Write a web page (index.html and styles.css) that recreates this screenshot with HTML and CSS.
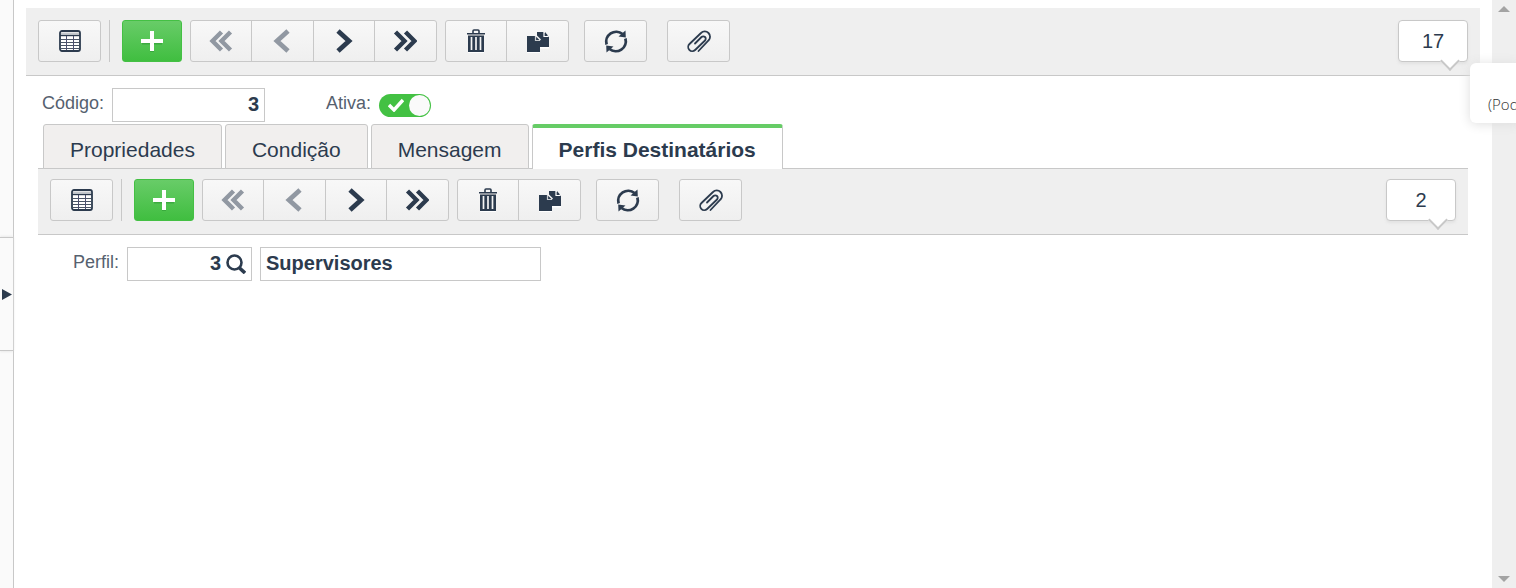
FILE: index.html
```html
<!DOCTYPE html>
<html lang="pt-BR">
<head>
    <meta charset="UTF-8">
    <meta name="viewport" content="width=device-width, initial-scale=1.0">
    <title>Perfis Destinatários</title>
    <link rel="stylesheet" href="styles.css">
</head>
<body>
    <svg class="sprite" aria-hidden="true">
        <symbol id="i-grid" viewBox="0 0 22 22">
            <rect x="1" y="1" width="20" height="20" rx="2" fill="#fff" stroke="#2c3b4e" stroke-width="1.8"/>
            <path d="M2 3.500h18" stroke="#c4c8cd" stroke-width="2"/>
            <path d="M1 5.500h20" stroke="#2c3b4e" stroke-width="1.400"/>
            <path d="M2 9.500h18M2 12.500h18M2 15.500h18M2 18.500h18" stroke="#4a5666" stroke-width="1"/>
            <path d="M7.500 6v14M14.500 6v14" stroke="#4d5070" stroke-width="1"/>
        </symbol>
        <symbol id="i-plus" viewBox="0 0 22 22">
            <path d="M11 3v19M1 12.5h20" stroke="#2f9a35" stroke-opacity=".6" stroke-width="4"/>
            <path d="M11 1v20M0 11h22" stroke="#fff" stroke-width="4"/>
        </symbol>
        <symbol id="i-prev" viewBox="0 0 24 24">
            <path d="M18 2 7 12l11 10" fill="none" stroke="currentColor" stroke-width="4.8"/>
        </symbol>
        <symbol id="i-next" viewBox="0 0 24 24">
            <path d="M6 2l11 10L6 22" fill="none" stroke="currentColor" stroke-width="4.8"/>
        </symbol>
        <symbol id="i-first" viewBox="0 0 24 24">
            <path d="M12.500 3 3.500 12l9 9M21.500 3l-9 9 9 9" fill="none" stroke="currentColor" stroke-width="4.400"/>
        </symbol>
        <symbol id="i-last" viewBox="0 0 24 24">
            <path d="M2.500 3l9 9-9 9M12.500 3l9 9-9 9" fill="none" stroke="currentColor" stroke-width="4.400"/>
        </symbol>
        <symbol id="i-trash" viewBox="0 0 24 24">
            <path d="M4 24.500h16" stroke="#fff" stroke-width="3"/>
            <path d="M9 4.500V2q0-1 1-1h4q1 0 1 1v2.500" fill="none" stroke="currentColor" stroke-width="1.600"/>
            <path d="M3 4h18v1.500H3z" fill="currentColor"/>
            <path d="M4 5.500h16V7H4z" fill="#8f959c"/>
            <path d="M4 7h16v16H4z" fill="currentColor"/>
            <path d="M7.500 8v13M12 8v13M16.500 8v13" stroke="#f4f4f4" stroke-width="1.700"/>
        </symbol>
        <symbol id="i-copy" viewBox="0 0 24 24">
            <path d="M1 23.500h13M14 18.500h9" stroke="#fff" stroke-width="2"/>
            <path d="M11 3h6.500l5.500 5v10H11z" fill="currentColor"/>
            <path d="M18 3v4.500h4.500" fill="none" stroke="#fff" stroke-width="1.200"/>
            <path d="M19 3v3.500h3z" fill="currentColor"/>
            <path d="M1 7h8.500l4.500 4.500V23H1z" fill="currentColor"/>
            <path d="M9.500 7v4.500H14" fill="none" stroke="#c9ccd0" stroke-width="1.200"/>
            <path d="M9.500 6l5 5" stroke="#f4f4f4" stroke-width="1.500"/>
        </symbol>
        <symbol id="i-refresh" viewBox="0 0 24 24">
            <path d="M2.600 15.500A10 10 0 0 1 18.500 5M21.400 9.500A10 10 0 0 1 5.500 20" fill="none" stroke="currentColor" stroke-width="2.800"/>
            <path d="M21.500 1.500 21.800 8.500 14.500 7.500zM2.500 23.500 2.200 16.500 9.500 17.500z" fill="currentColor"/>
        </symbol>
        <symbol id="i-clip" viewBox="0 0 24 24">
            <path d="M11.500 22 21.500 11.500a5 5 0 0 0-7.500-7.500L2.500 15a3.900 3.900 0 0 0 5.600 6L18 11.500a2.400 2.400 0 0 0-3.500-3.500L8 14.500" fill="none" stroke="currentColor" stroke-width="1.800" stroke-linecap="round"/>
        </symbol>
        <symbol id="i-search" viewBox="0 0 20 20">
            <circle cx="8.500" cy="8.500" r="7" fill="none" stroke="currentColor" stroke-width="2.600"/>
            <path d="M13 13.500l6 5.500" stroke="currentColor" stroke-width="3.600"/>
        </symbol>
    </svg>

    <div class="page">
        <aside class="sidebar">
            <button class="sidebar-toggle" aria-label="Abrir menu">
                <svg width="10" height="11" viewBox="0 0 10 11"><path d="M0 0l10 5.500L0 11z" fill="#2c3b4e"/></svg>
            </button>
        </aside>

        <main class="content">
            <div class="toolbar">
                <button class="btn" aria-label="Grade"><svg class="icon small"><use href="#i-grid"/></svg></button>
                <span class="separator"></span>
                <button class="btn btn-add" aria-label="Novo"><svg class="icon small"><use href="#i-plus"/></svg></button>
                <div class="btn-group nav">
                    <button class="btn" aria-label="Primeiro" disabled><svg class="icon"><use href="#i-first"/></svg></button>
                    <button class="btn" aria-label="Anterior" disabled><svg class="icon"><use href="#i-prev"/></svg></button>
                    <button class="btn" aria-label="Próximo"><svg class="icon"><use href="#i-next"/></svg></button>
                    <button class="btn" aria-label="Último"><svg class="icon"><use href="#i-last"/></svg></button>
                </div>
                <div class="btn-group edit">
                    <button class="btn" aria-label="Excluir"><svg class="icon"><use href="#i-trash"/></svg></button>
                    <button class="btn" aria-label="Duplicar"><svg class="icon"><use href="#i-copy"/></svg></button>
                </div>
                <button class="btn btn-refresh" aria-label="Atualizar"><svg class="icon"><use href="#i-refresh"/></svg></button>
                <button class="btn btn-clip" aria-label="Anexos"><svg class="icon"><use href="#i-clip"/></svg></button>
                <div class="counter">17</div>
            </div>

            <div class="form">
                <div class="row">
                    <label for="codigo">Código:</label>
                    <input class="field codigo" id="codigo" type="text" value="3">
                    <label class="label-ativa" for="ativa">Ativa:</label>
                    <span class="switch">
                        <input id="ativa" type="checkbox" checked>
                        <svg class="check" viewBox="0 0 16 14"><path d="M1 7l5 5 9-10" fill="none" stroke="#fff" stroke-width="3.400"/></svg>
                    </span>
                </div>

                <div class="tabs" role="tablist">
                    <button class="tab" role="tab">Propriedades</button>
                    <button class="tab" role="tab">Condição</button>
                    <button class="tab" role="tab">Mensagem</button>
                    <button class="tab active" role="tab" aria-selected="true">Perfis Destinatários</button>
                </div>

                <div class="toolbar inner">
                    <button class="btn" aria-label="Grade"><svg class="icon small"><use href="#i-grid"/></svg></button>
                    <span class="separator"></span>
                    <button class="btn btn-add" aria-label="Novo"><svg class="icon small"><use href="#i-plus"/></svg></button>
                    <div class="btn-group nav">
                        <button class="btn" aria-label="Primeiro" disabled><svg class="icon"><use href="#i-first"/></svg></button>
                        <button class="btn" aria-label="Anterior" disabled><svg class="icon"><use href="#i-prev"/></svg></button>
                        <button class="btn" aria-label="Próximo"><svg class="icon"><use href="#i-next"/></svg></button>
                        <button class="btn" aria-label="Último"><svg class="icon"><use href="#i-last"/></svg></button>
                    </div>
                    <div class="btn-group edit">
                        <button class="btn" aria-label="Excluir"><svg class="icon"><use href="#i-trash"/></svg></button>
                        <button class="btn" aria-label="Duplicar"><svg class="icon"><use href="#i-copy"/></svg></button>
                    </div>
                    <button class="btn btn-refresh" aria-label="Atualizar"><svg class="icon"><use href="#i-refresh"/></svg></button>
                    <button class="btn btn-clip" aria-label="Anexos"><svg class="icon"><use href="#i-clip"/></svg></button>
                    <div class="counter">2</div>
                </div>

                <div class="row row-perfil">
                    <label for="perfil">Perfil:</label>
                    <div class="field lookup">
                        <input id="perfil" type="text" value="3">
                        <button aria-label="Pesquisar"><svg width="20" height="20"><use href="#i-search"/></svg></button>
                    </div>
                    <input class="field descricao" type="text" value="Supervisores" aria-label="Descrição do perfil">
                </div>
            </div>
        </main>

        <div class="scrollbar" aria-hidden="true">
            <svg width="12" height="6" viewBox="0 0 12 6"><path d="M0 6l6-6 6 6z" fill="#a3a3a3"/></svg>
            <svg width="12" height="6" viewBox="0 0 12 6"><path d="M0 0l6 6 6-6z" fill="#a3a3a3"/></svg>
        </div>

        <div class="popup">(Pod</div>
    </div>
</body>
</html>
```

FILE: styles.css
```css
* {
    box-sizing: border-box;
}
body {
    margin: 0;
    font-family: "Liberation Sans", Arial, sans-serif;
    color: #2c3b4e;
    background: #fff;
}
button, input {
    font-family: inherit;
    color: inherit;
    margin: 0;
}
.sprite {
    display: none;
}
.page {
    display: flex;
    position: relative;
    min-height: 100vh;
    overflow: hidden;
}

/* sidebar */
.sidebar {
    width: 14px;
    display: flex;
    align-items: center;
    background: #fafafa;
    border-right: 1px solid #c8c8c8;
}
.sidebar-toggle {
    width: 13px;
    height: 114px;
    padding: 0 0 0 2px;
    display: flex;
    align-items: center;
    background: #fafafa;
    border: solid #c8c8c8;
    border-width: 1px 0;
    box-shadow: 0 0 3px #ddd;
}

.content {
    flex: 1;
    min-width: 0;
    padding: 8px 12px;
}

/* toolbar */
.toolbar {
    display: flex;
    align-items: flex-start;
    height: 68px;
    padding: 12px;
    background: #efefef;
    border-bottom: 1px solid #c8c8c8;
}
.toolbar.inner {
    height: 67px;
    padding-top: 10px;
    border-top: 1px solid #c8c8c8;
}
.btn {
    width: 63px;
    height: 42px;
    padding: 0;
    display: flex;
    align-items: center;
    justify-content: center;
    background: linear-gradient(#f8f8f8, #efefef);
    border: 1px solid #c8c8c8;
    border-radius: 3px;
}
.btn:disabled {
    color: #9198a2;
}
.icon {
    width: 24px;
    height: 24px;
    overflow: visible;
}
.icon.small {
    width: 22px;
    height: 22px;
}
.separator {
    width: 1px;
    height: 42px;
    margin: 0 12px 0 8px;
    background: #c8c8c8;
}
.btn-add {
    width: 60px;
    background: linear-gradient(#68cc68, #40be40);
    border-color: #44c044;
}
.btn-group {
    display: grid;
    grid-auto-flow: column;
    grid-auto-columns: 1fr;
    margin-left: 8px;
    background: linear-gradient(#f8f8f8, #efefef);
    border: 1px solid #c8c8c8;
    border-radius: 3px;
}
.btn-group .btn {
    width: auto;
    height: 40px;
    background: none;
    border: 0;
    border-radius: 0;
}
.btn-group .btn:not(:last-child) {
    border-right: 1px solid #c8c8c8;
}
.nav {
    width: 247px;
}
.edit {
    width: 124px;
}
.btn-refresh {
    margin-left: 15px;
}
.btn-clip {
    margin-left: 20px;
}
.counter {
    position: relative;
    width: 70px;
    height: 42px;
    margin-left: auto;
    font-size: 20px;
    line-height: 40px;
    text-align: center;
    background: #fff;
    border: 1px solid #c8c8c8;
    border-radius: 4px;
    box-shadow: 0 2px 3px #e2e2e2;
}
.counter::after {
    content: "";
    position: absolute;
    right: 10px;
    bottom: -7px;
    width: 12px;
    height: 12px;
    background: #fff;
    border: solid #c8c8c8;
    border-width: 0 2px 2px 0;
    transform: rotate(45deg);
}

/* form */
.form {
    padding: 12px 12px 0;
}
.row {
    display: flex;
    padding-left: 4px;
}
.row label {
    font-size: 18px;
    line-height: 30px;
    margin-right: 8px;
    color: #56616f;
}
.row .label-ativa {
    margin-left: 61px;
}
.row-perfil {
    padding: 12px 0 0 35px;
}
.field {
    height: 34px;
    padding: 0 5px 2px;
    font-size: 20px;
    font-weight: bold;
    background: #fff;
    border: 1px solid #c8c8c8;
}
.codigo {
    width: 153px;
    text-align: right;
}
.lookup {
    width: 125px;
    margin-right: 8px;
    display: flex;
    align-items: center;
    gap: 5px;
    padding: 0 5px 0 0;
}
.lookup input {
    flex: 1;
    min-width: 0;
    height: 30px;
    padding: 0 0 2px;
    font-size: 20px;
    font-weight: bold;
    text-align: right;
    background: none;
    border: 0;
}
.lookup button {
    display: flex;
    padding: 0;
    background: none;
    border: 0;
}
.descricao {
    width: 281px;
}
.switch {
    position: relative;
    height: 23px;
    margin-top: 6px;
}
.switch input {
    appearance: none;
    display: block;
    width: 52px;
    height: 23px;
    padding: 1px;
    background: #43c143;
    border-radius: 12px;
}
.switch input::after {
    content: "";
    display: block;
    width: 21px;
    height: 21px;
    margin-left: auto;
    background: #fafafa;
    border-radius: 50%;
}
.check {
    position: absolute;
    left: 9px;
    top: 4px;
    width: 16px;
    height: 14px;
}

/* tabs */
.tabs {
    display: flex;
    gap: 3px;
    padding: 2px 5px 0;
    margin-bottom: -1px;
}
.tab {
    height: 45px;
    padding: 6px 26px 0;
    font-size: 21px;
    background: #f1efee;
    border: 1px solid #c8c8c8;
    border-radius: 3px 3px 0 0;
}
.tab.active {
    position: relative;
    padding-top: 3px;
    font-weight: bold;
    background: #fff;
    border-top: 4px solid #66cc66;
    border-bottom: 0;
}

/* right edge */
.scrollbar {
    width: 24px;
    padding: 6px 0;
    display: flex;
    flex-direction: column;
    align-items: center;
    justify-content: space-between;
    background: #efefef;
}
.popup {
    position: absolute;
    top: 63px;
    right: -6px;
    width: 52px;
    height: 60px;
    padding: 31px 0 0 18px;
    font-family: "Open Sans", sans-serif;
    font-size: 15px;
    font-weight: 300;
    line-height: 20px;
    color: #333;
    background: #fff;
    border-radius: 6px;
    box-shadow: 0 1px 12px #ddd;
}
```
